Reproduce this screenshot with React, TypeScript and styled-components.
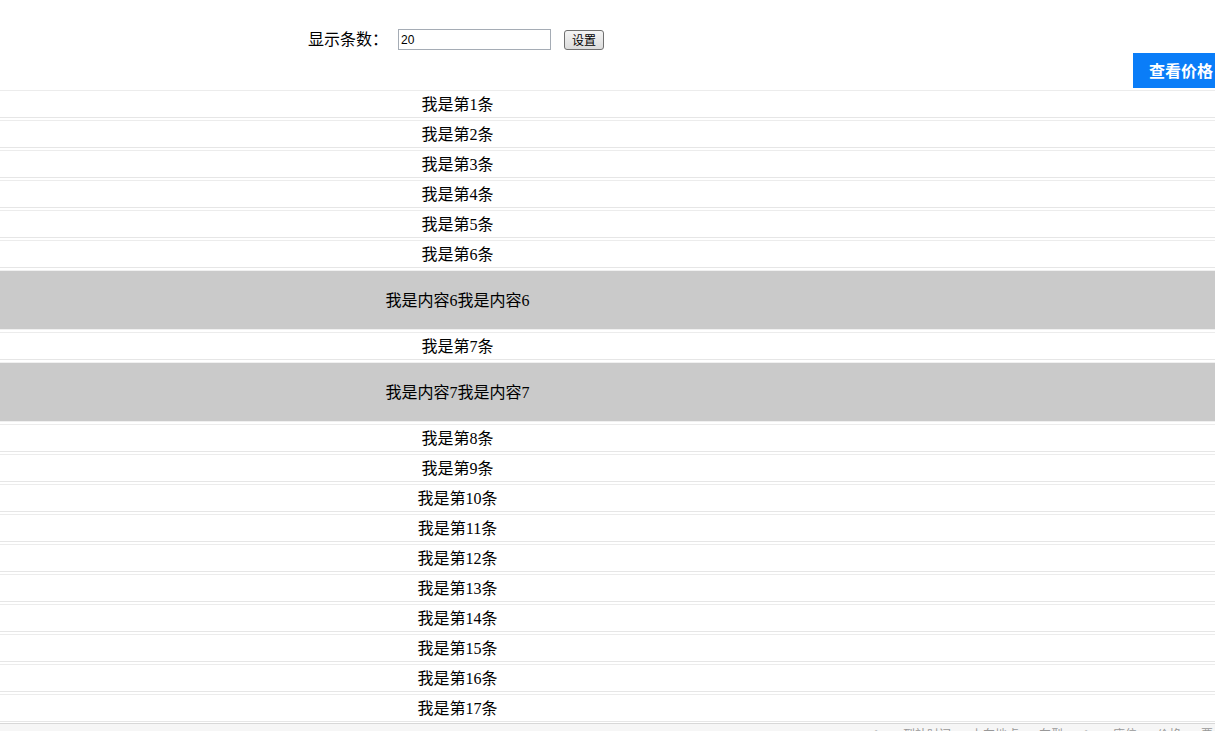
import React from "react";
import styled, { createGlobalStyle } from "styled-components";

const Global = createGlobalStyle`
  html, body { margin: 0; padding: 0; overflow: hidden; background: #fff; }
  body { font-family: "Liberation Serif", "Noto Sans CJK SC", serif; color: #000; }
`;

const Page = styled.div`
  width: 1215px;
  overflow: hidden;
`;

const Controls = styled.div`
  display: flex;
  align-items: center;
  padding: 29px 0 0 308px;
  height: 21px;
`;

const Label = styled.span`
  font-size: 16px;
  line-height: 21px;
  width: 90px;
  white-space: nowrap;
`;

const CountInput = styled.input`
  box-sizing: border-box;
  width: 153px;
  height: 21px;
  margin: 0;
  padding: 1px 2px;
  border: 1px solid #a5acb5;
  font-family: "Liberation Sans", Arial, sans-serif;
  font-size: 12px;
  color: #000;
  outline: none;
`;

const SetButton = styled.button`
  box-sizing: border-box;
  margin: 0 0 0 13px;
  width: 40px;
  height: 20px;
  padding: 0;
  border: 1px solid #707070;
  border-radius: 3px;
  background: linear-gradient(#f4f4f4, #dcdcdc);
  font-family: "Noto Sans CJK SC", sans-serif;
  font-size: 12px;
  line-height: 18px;
  color: #000;
`;

const ActionBar = styled.div`
  display: flex;
  justify-content: flex-end;
  margin-top: 3px;
  margin-bottom: 2px;
`;

const PriceButton = styled.div`
  box-sizing: border-box;
  width: 96px;
  height: 35px;
  margin-right: -14px;
  padding-left: 16px;
  background: #0a7df8;
  color: #fff;
  font-family: "Noto Sans CJK SC", sans-serif;
  font-weight: bold;
  font-size: 16px;
  line-height: 35px;
  white-space: nowrap;
`;

const List = styled.div`
  display: flex;
  flex-direction: column;
`;

const Row = styled.div<{ $tall?: boolean; $detail?: boolean }>`
  height: ${(p) => (p.$tall ? 58 : 26)}px;
  border-top: 1px solid ${(p) => (p.$detail ? "#f0f0f0" : "#ececec")};
  border-bottom: 1px solid ${(p) => (p.$detail ? "#f0f0f0" : "#e6e6e6")};
  margin-bottom: 2px;
  background: ${(p) => (p.$detail ? "#cacaca" : "#fff")};
  display: flex;
  align-items: center;
`;

const RowText = styled.div`
  width: 915px;
  margin-top: 2px;
  text-align: center;
  font-size: 16px;
  line-height: 20px;
  white-space: nowrap;
`;

const Footer = styled.div`
  margin-top: -1px;
  border-top: 1px solid #d8d8d8;
  background: #f6f6f6;
  height: 40px;
  display: flex;
  justify-content: flex-end;
  gap: 20px;
  padding: 0 2px 0 0;
  font-family: "Noto Sans CJK SC", sans-serif;
  font-size: 12px;
  line-height: 14px;
  color: #999;
`;

const FooterItem = styled.span`
  white-space: nowrap;
  margin-top: 3px;
`;

type Item = { label: string; detail?: string };

const items: Item[] = [];
for (let i = 1; i <= 20; i++) {
  items.push({
    label: `我是第${i}条`,
    detail: i === 6 || i === 7 ? `我是内容${i}我是内容${i}` : undefined,
  });
}

export default function App() {
  return (
    <>
      <Global />
      <Page>
        <Controls>
          <Label>显示条数：</Label>
          <CountInput defaultValue="20" />
          <SetButton>设置</SetButton>
        </Controls>
        <ActionBar>
          <PriceButton>查看价格</PriceButton>
        </ActionBar>
        <List>
          {items.slice(0, 17).map((it) => (
            <React.Fragment key={it.label}>
              <Row>
                <RowText>{it.label}</RowText>
              </Row>
              {it.detail && (
                <Row $tall $detail>
                  <RowText>{it.detail}</RowText>
                </Row>
              )}
            </React.Fragment>
          ))}
        </List>
        <Footer>
          <FooterItem>✎</FooterItem>
          <FooterItem>到站时间</FooterItem>
          <FooterItem>上车地点</FooterItem>
          <FooterItem>车型</FooterItem>
          <FooterItem>✎</FooterItem>
          <FooterItem>座位</FooterItem>
          <FooterItem>价格</FooterItem>
          <FooterItem>票</FooterItem>
        </Footer>
      </Page>
    </>
  );
}
